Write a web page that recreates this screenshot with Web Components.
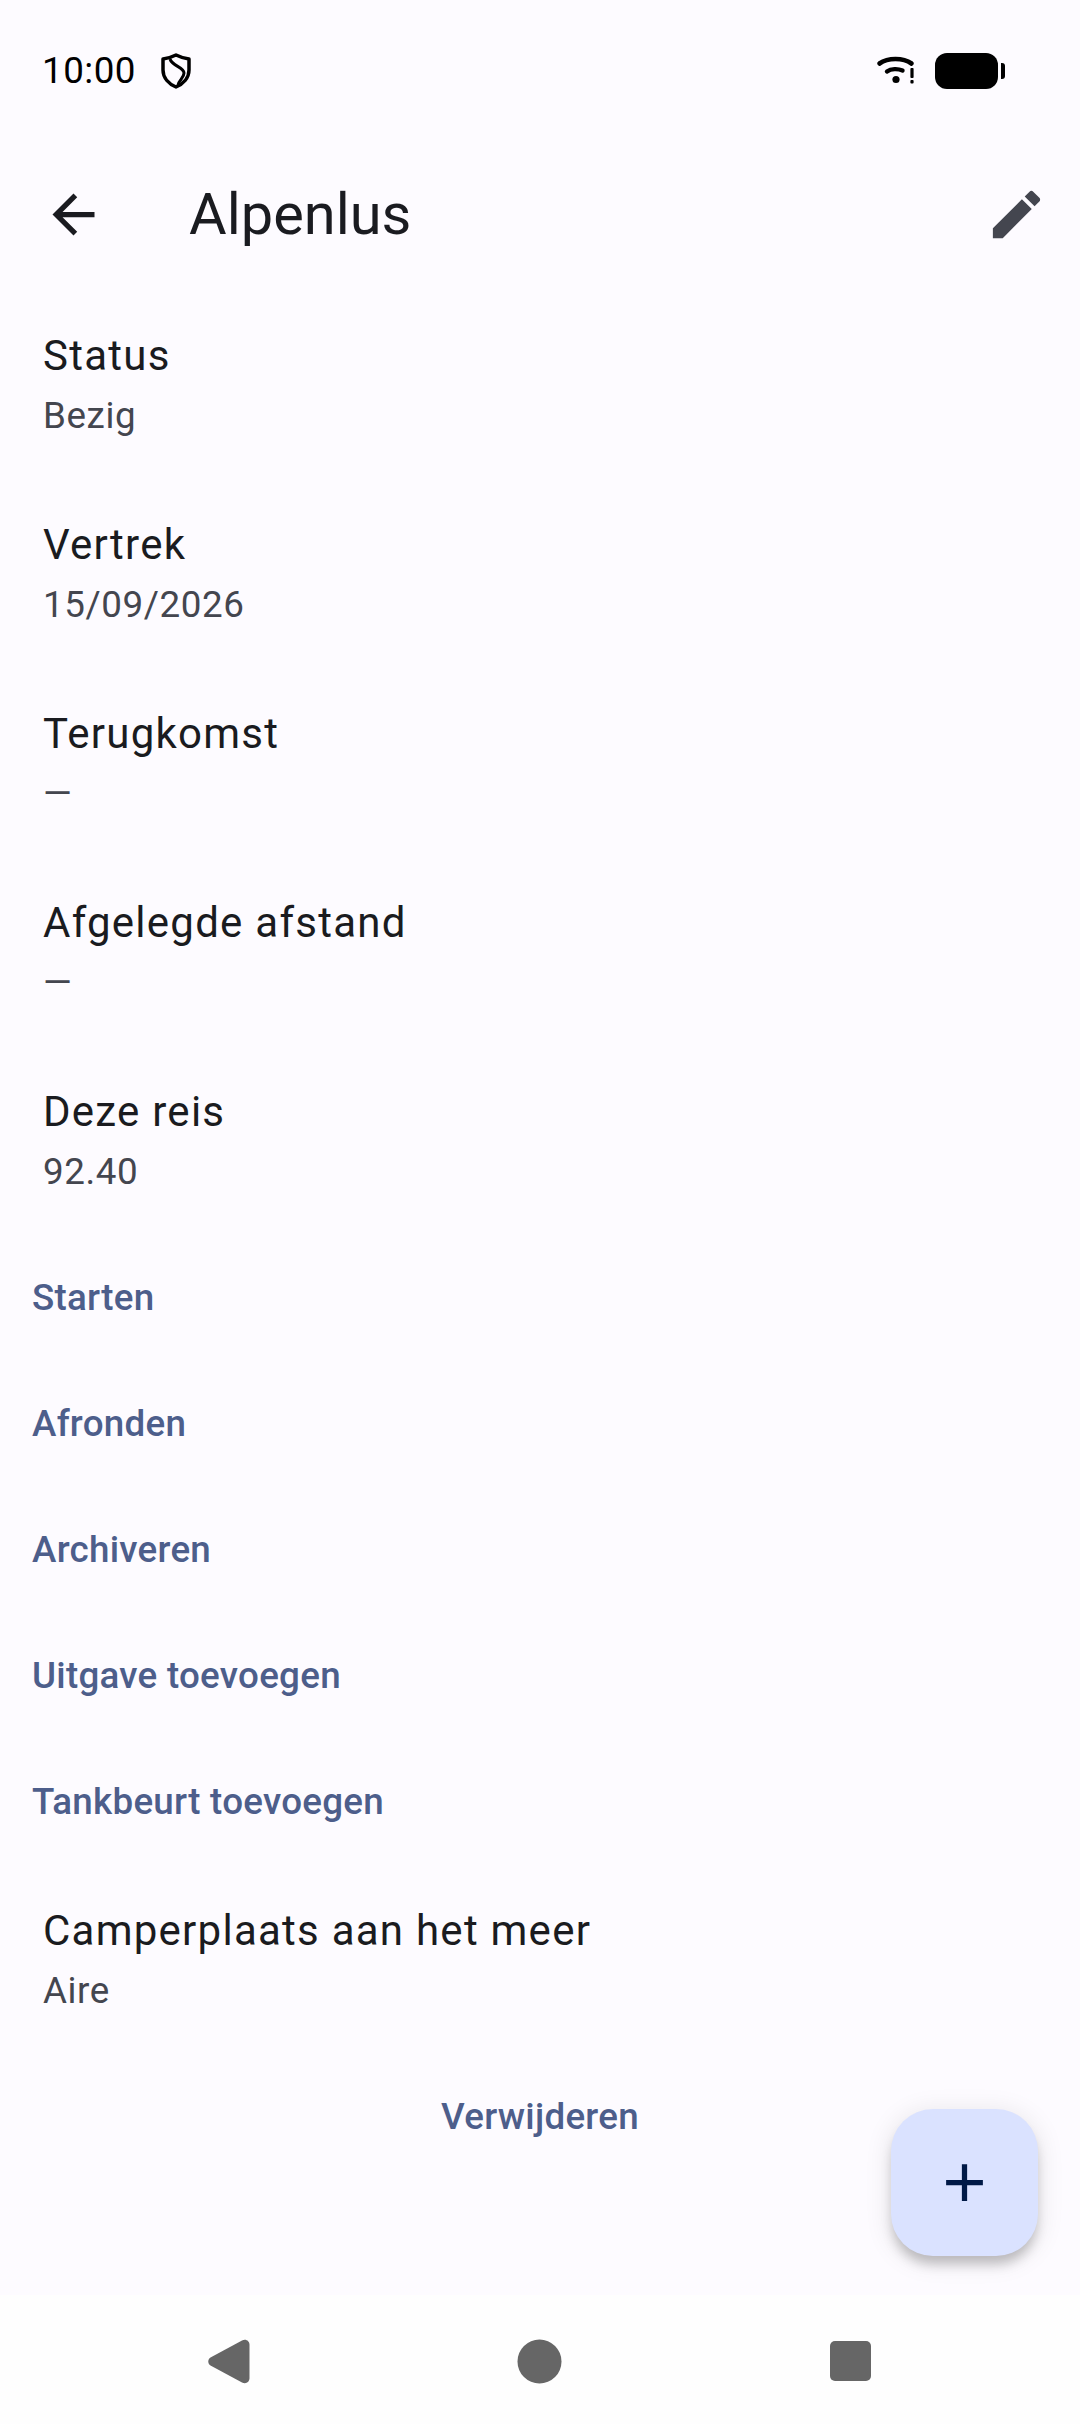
<!DOCTYPE html>
<html lang="nl">
<head>
<meta charset="utf-8">
<title>Alpenlus</title>
<style>
  html, body { margin: 0; padding: 0; background: #fdfbff; }
  body { width: 1080px; height: 2424px; overflow: hidden; font-family: Roboto, "Liberation Sans", sans-serif; }
  trip-screen { height: 2424px; }
</style>
</head>
<body>
<trip-screen>
  <status-bar slot="top" time="10:00"></status-bar>
  <app-bar slot="top" title="Alpenlus"></app-bar>

  <detail-row label="Status">Bezig</detail-row>
  <detail-row label="Vertrek">15/09/2026</detail-row>
  <detail-row label="Terugkomst">—</detail-row>
  <detail-row label="Afgelegde afstand">—</detail-row>
  <detail-row label="Deze reis">92.40</detail-row>
  <text-action>Starten</text-action>
  <text-action>Afronden</text-action>
  <text-action>Archiveren</text-action>
  <text-action>Uitgave toevoegen</text-action>
  <text-action>Tankbeurt toevoegen</text-action>
  <detail-row label="Camperplaats aan het meer">Aire</detail-row>
  <text-action center>Verwijderen</text-action>

  <add-fab slot="overlay"></add-fab>
  <nav-bar slot="bottom"></nav-bar>
</trip-screen>

<script>
class TripScreen extends HTMLElement {
  constructor() {
    super();
    this.attachShadow({ mode: 'open' }).innerHTML = `
    <style>
      :host { display: flex; flex-direction: column; position: relative; background: #fdfbff; }
      .content { flex: 1; min-height: 0; display: flex; flex-direction: column; }
    </style>
    <slot name="top"></slot>
    <div class="content"><slot></slot></div>
    <slot name="overlay"></slot>
    <slot name="bottom"></slot>`;
  }
}

class StatusBar extends HTMLElement {
  constructor() {
    super();
    this.attachShadow({ mode: 'open' }).innerHTML = `
    <style>
      :host { display: flex; align-items: center; height: 141px; padding: 0 73px 0 42px; box-sizing: border-box; color: #000; }
      .time { font-size: 36.75px; line-height: 42px; letter-spacing: 0.5px; }
      .shield { width: 30px; height: 36px; margin-left: 25px; }
      .spacer { flex: 1; }
      .wifi { width: 40px; height: 30px; }
      .battery { width: 72px; height: 36px; margin-left: 19px; }
    </style>
    <span class="time">${this.getAttribute('time')}</span>
    <svg class="shield" viewBox="0 0 30 36">
      <path d="M15 2 C19 4 24 5.5 28 6 V17 C28 25 22 31 15 34 C8 31 2 25 2 17 V6 C6 5.5 11 4 15 2 Z" fill="none" stroke="#000" stroke-width="3.5" stroke-linejoin="round"/>
      <path d="M9 6 C11 13 23 14 23 20 C23 25 18 27 17 32" fill="none" stroke="#000" stroke-width="3"/>
    </svg>
    <span class="spacer"></span>
    <svg class="wifi" viewBox="0 0 40 30">
      <path d="M3.5 7.5 C12 1.5 27 1.5 35.5 7.5" fill="none" stroke="#000" stroke-width="4.6" stroke-linecap="round"/>
      <path d="M11 15.5 C15 12.5 22 12.5 26.5 14.5" fill="none" stroke="#000" stroke-width="4.4" stroke-linecap="round"/>
      <circle cx="20" cy="23.5" r="3.6" fill="#000"/>
      <rect x="34.4" y="12" width="3.2" height="10" rx="1" fill="#000"/>
      <rect x="34.4" y="24" width="3.2" height="3.4" rx="1" fill="#000"/>
    </svg>
    <svg class="battery" viewBox="0 0 72 36">
      <rect x="0" y="0" width="63" height="36" rx="12" fill="#000"/>
      <path d="M66 10 H67 C69 10 70 11 70 13 V23 C70 25 69 26 67 26 H66 Z" fill="#000"/>
    </svg>`;
  }
}

class AppBar extends HTMLElement {
  constructor() {
    super();
    this.attachShadow({ mode: 'open' }).innerHTML = `
    <style>
      :host { display: flex; align-items: center; height: 147px; padding: 0 8px 0 42px; box-sizing: border-box; color: #1a1b20; }
      svg { width: 63px; height: 63px; flex: none; }
      .title { flex: 1; margin-left: 84px; font-size: 57.75px; line-height: 73px; font-weight: 400; }
      .edit { fill: #44464f; margin-right: 24px; }
      .back { fill: #1a1b20; }
    </style>
    <svg class="back" viewBox="0 0 24 24"><path d="M20 11H7.83l5.59-5.59L12 4l-8 8 8 8 1.41-1.41L7.83 13H20v-2z"/></svg>
    <span class="title">${this.getAttribute('title')}</span>
    <svg class="edit" viewBox="0 0 24 24"><path d="M3 17.25V21h3.75L17.81 9.94l-3.75-3.75L3 17.25zM20.71 7.04c.39-.39.39-1.02 0-1.41l-2.34-2.34c-.39-.39-1.02-.39-1.41 0l-1.83 1.83 3.75 3.75 1.83-1.83z"/></svg>`;
  }
}

class DetailRow extends HTMLElement {
  constructor() {
    super();
    this.attachShadow({ mode: 'open' }).innerHTML = `
    <style>
      :host { display: flex; flex-direction: column; justify-content: center; gap: 3px; height: 189px; padding: 1px 43px 0; box-sizing: border-box; flex: none; }
      .label { font-size: 42px; line-height: 63px; letter-spacing: 1.25px; color: #1a1b20; }
      .value { font-size: 36.75px; line-height: 52.5px; letter-spacing: 0.6px; color: #44464f; }
    </style>
    <div class="label">${this.getAttribute('label')}</div>
    <div class="value"><slot></slot></div>`;
  }
}

class TextAction extends HTMLElement {
  constructor() {
    super();
    this.attachShadow({ mode: 'open' }).innerHTML = `
    <style>
      :host { display: flex; align-items: center; height: 126px; padding: 3px 32px 0; box-sizing: border-box; flex: none;
        font-size: 36.75px; font-weight: 500; letter-spacing: 0.26px; color: #4d5e8b; }
      :host([center]) { justify-content: center; }
    </style>
    <slot></slot>`;
  }
}

class AddFab extends HTMLElement {
  constructor() {
    super();
    this.attachShadow({ mode: 'open' }).innerHTML = `
    <style>
      :host { display: flex; align-items: center; justify-content: center; position: absolute; right: 42px; bottom: 168px;
        width: 147px; height: 147px; border-radius: 42px; background: #dae2ff;
        box-shadow: 0 10px 12px -2px rgba(0,0,0,.22), 0 4px 24px 4px rgba(0,0,0,.08); }
      svg { width: 63px; height: 63px; fill: #001946; }
    </style>
    <svg viewBox="0 0 24 24"><path d="M19 13h-6v6h-2v-6H5v-2h6V5h2v6h6v2z"/></svg>`;
  }
}

class NavBar extends HTMLElement {
  constructor() {
    super();
    this.attachShadow({ mode: 'open' }).innerHTML = `
    <style>
      :host { display: grid; grid-template-columns: repeat(3, 1fr); height: 129px; background: #fefefe; padding: 3px 74px 0; align-items: center; justify-items: center; box-sizing: border-box; }
      svg { width: 63px; height: 63px; fill: #666; }
    </style>
    <svg viewBox="0 0 63 63"><path d="M12.5 27.5 L44 10.5 C48 8.5 51.5 11 51.5 15 V48 C51.5 52 48 54.5 44 52.5 L12.5 35.5 C9.5 33.5 9.5 29.5 12.5 27.5 Z"/></svg>
    <svg viewBox="0 0 63 63"><circle cx="31.5" cy="31.5" r="22"/></svg>
    <svg viewBox="0 0 63 63"><rect x="11" y="11" width="41" height="40" rx="5"/></svg>`;
  }
}

customElements.define('trip-screen', TripScreen);
customElements.define('status-bar', StatusBar);
customElements.define('app-bar', AppBar);
customElements.define('detail-row', DetailRow);
customElements.define('text-action', TextAction);
customElements.define('add-fab', AddFab);
customElements.define('nav-bar', NavBar);
</script>
</body>
</html>
